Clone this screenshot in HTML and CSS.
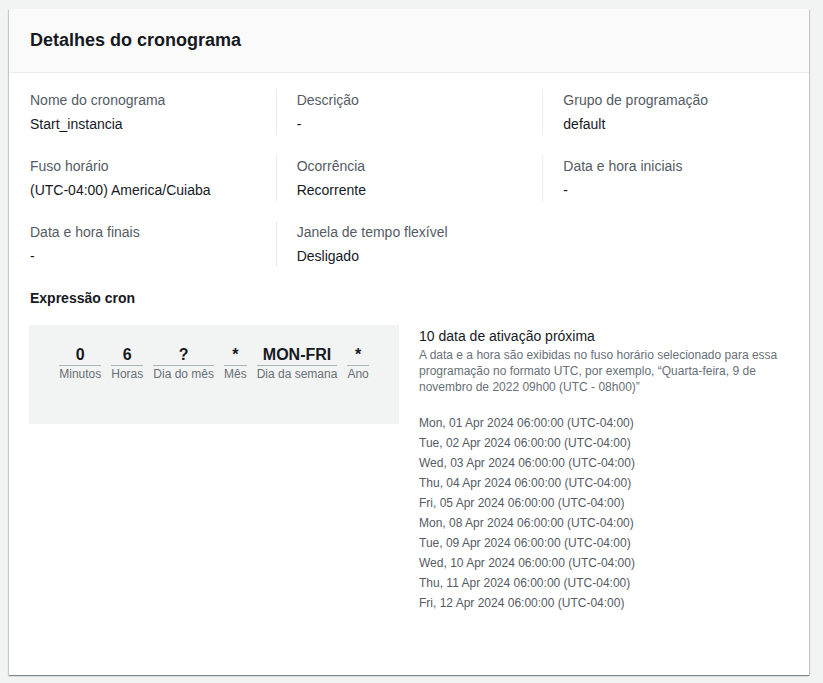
FILE: index.html
```html
<!DOCTYPE html>
<html lang="pt-BR">
<head>
<meta charset="utf-8">
<title>Detalhes do cronograma</title>
<link rel="stylesheet" href="styles.css">
</head>
<body>
<div class="page">
  <section class="card">
    <header class="card-header">
      <h2 class="card-title">Detalhes do cronograma</h2>
    </header>
    <div class="card-body">
      <div class="kv-grid">
        <div class="kv first"><div class="kv-label">Nome do cronograma</div><div class="kv-value">Start_instancia</div></div>
        <div class="kv"><div class="kv-label">Descrição</div><div class="kv-value">-</div></div>
        <div class="kv"><div class="kv-label">Grupo de programação</div><div class="kv-value">default</div></div>
        <div class="kv first"><div class="kv-label">Fuso horário</div><div class="kv-value">(UTC-04:00) America/Cuiaba</div></div>
        <div class="kv"><div class="kv-label">Ocorrência</div><div class="kv-value">Recorrente</div></div>
        <div class="kv"><div class="kv-label">Data e hora iniciais</div><div class="kv-value">-</div></div>
        <div class="kv first"><div class="kv-label">Data e hora finais</div><div class="kv-value">-</div></div>
        <div class="kv"><div class="kv-label">Janela de tempo flexível</div><div class="kv-value">Desligado</div></div>
      </div>

      <h3 class="section-title">Expressão cron</h3>

      <div class="cron-layout">
        <div class="cron-box">
          <div class="cron-fields">
            <div class="cron-field"><div class="cron-value">0</div><div class="cron-label">Minutos</div></div>
            <div class="cron-field"><div class="cron-value">6</div><div class="cron-label">Horas</div></div>
            <div class="cron-field"><div class="cron-value">?</div><div class="cron-label">Dia do mês</div></div>
            <div class="cron-field"><div class="cron-value">*</div><div class="cron-label">Mês</div></div>
            <div class="cron-field"><div class="cron-value">MON-FRI</div><div class="cron-label">Dia da semana</div></div>
            <div class="cron-field"><div class="cron-value">*</div><div class="cron-label">Ano</div></div>
          </div>
        </div>
        <div class="next-dates">
          <div class="next-title">10 data de ativação próxima</div>
          <div class="next-desc">A data e a hora são exibidas no fuso horário selecionado para essa programação no formato UTC, por exemplo, “Quarta-feira, 9 de novembro de 2022 09h00 (UTC - 08h00)”</div>
          <ul class="date-list">
            <li>Mon, 01 Apr 2024 06:00:00 (UTC-04:00)</li>
            <li>Tue, 02 Apr 2024 06:00:00 (UTC-04:00)</li>
            <li>Wed, 03 Apr 2024 06:00:00 (UTC-04:00)</li>
            <li>Thu, 04 Apr 2024 06:00:00 (UTC-04:00)</li>
            <li>Fri, 05 Apr 2024 06:00:00 (UTC-04:00)</li>
            <li>Mon, 08 Apr 2024 06:00:00 (UTC-04:00)</li>
            <li>Tue, 09 Apr 2024 06:00:00 (UTC-04:00)</li>
            <li>Wed, 10 Apr 2024 06:00:00 (UTC-04:00)</li>
            <li>Thu, 11 Apr 2024 06:00:00 (UTC-04:00)</li>
            <li>Fri, 12 Apr 2024 06:00:00 (UTC-04:00)</li>
          </ul>
        </div>
      </div>
    </div>
  </section>
</div>
</body>
</html>
```

FILE: styles.css
```css
* { box-sizing: border-box; }
html, body {
  margin: 0;
  padding: 0;
  background: #f2f3f3;
  font-family: "Liberation Sans", Arial, sans-serif;
  color: #16191f;
}
.page {
  padding: 9px 14px 8px 9px;
}
.card {
  width: 800px;
  height: 666px;
  background: #ffffff;
  box-shadow: 0 1px 1px 0 rgba(0, 28, 36, 0.3), 1px 1px 1px 0 rgba(0, 28, 36, 0.15), -1px 1px 1px 0 rgba(0, 28, 36, 0.15);
  overflow: hidden;
}
.card-header {
  background: #fafafa;
  border-bottom: 1px solid #eaeded;
  padding: 20px 20px 21px 21px;
}
.card-title {
  margin: 0;
  font-size: 18px;
  line-height: 22px;
  font-weight: 700;
  color: #16191f;
}
.card-body {
  padding: 16px 20px 20px 20px;
}
.kv-grid {
  display: grid;
  grid-template-columns: repeat(3, 1fr);
  row-gap: 20px;
  margin: 0 -20px;
}
.kv {
  border-left: 1px solid #eaeded;
  padding: 0 20px;
  min-height: 46px;
}
.kv.first {
  border-left-color: transparent;
}
.kv-label {
  font-size: 14px;
  line-height: 22px;
  color: #545b64;
}
.kv-value {
  font-size: 14px;
  line-height: 22px;
  margin-top: 2px;
  color: #16191f;
}
.section-title {
  margin: 20px 0 16px 1px;
  font-size: 14px;
  line-height: 22px;
  font-weight: 700;
  color: #16191f;
}
.cron-layout {
  display: grid;
  grid-template-columns: 370px 370px;
  column-gap: 20px;
  align-items: start;
}
.cron-box {
  background: #f2f3f3;
  height: 99px;
  padding-top: 20px;
}
.cron-fields {
  display: flex;
  justify-content: center;
  gap: 10px;
}
.cron-field {
  display: flex;
  flex-direction: column;
  align-items: stretch;
  text-align: center;
}
.cron-value {
  font-size: 16px;
  line-height: 20px;
  font-weight: 700;
  color: #16191f;
  border-bottom: 1px solid #aab7b8;
}
.cron-label {
  font-size: 12px;
  line-height: 16px;
  color: #687078;
  white-space: nowrap;
}
.next-title {
  font-size: 14px;
  line-height: 22px;
  color: #16191f;
}
.next-desc {
  font-size: 12px;
  line-height: 16px;
  color: #687078;
}
.date-list {
  list-style: none;
  margin: 18px 0 0 0;
  padding: 0;
}
.date-list li {
  font-size: 12px;
  line-height: 20px;
  color: #545b64;
}
```
